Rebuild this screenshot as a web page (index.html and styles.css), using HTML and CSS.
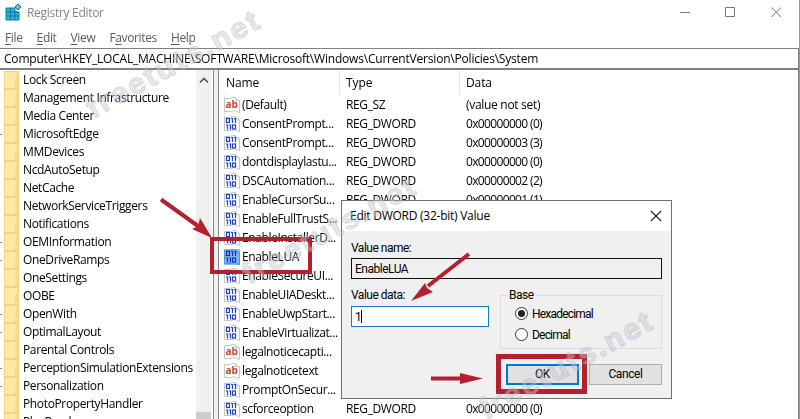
FILE: index.html
```
<!DOCTYPE html>
<html lang="en">
<head>
<meta charset="utf-8">
<title>Registry Editor</title>
<link rel="stylesheet" href="styles.css">
</head>
<body>
<svg width="0" height="0" class="defs">
  <symbol id="page" viewBox="0 0 16 16">
    <path d="M.5 1.500h5l3-1h3l1 2 3 1v12l-3-1-2-1-3 1h-7z" fill="#fdfdfd" stroke="#b3b8b6" stroke-width=".8"/>
    <path d="M11.500 1v3h3" fill="none" stroke="#b9bdbb" stroke-width=".7"/>
  </symbol>
  <symbol id="bin" viewBox="0 0 16 16">
    <use href="#page"/>
    <g fill="none" stroke="#2040c8" stroke-width="1.200">
      <rect x="2.500" y="2.500" width="3" height="4"/><path d="M7 2.500h1.500V7M10 2.500h1.500V7M2 9h1.500v4.500M5 9h1.500v4.500"/><rect x="8.500" y="9" width="3" height="4"/>
    </g>
  </symbol>
</svg>
<div class="window">
  <header class="titlebar">
    <svg class="app" width="17" height="17" viewBox="0 0 17 17">
      <path d="M1 4h9v4h4v8H1z" fill="#25b5e2" stroke="#14789e"/>
      <path d="M1 8h13M1 12h13M5.500 4v12M10 7v9" stroke="#14789e" fill="none"/>
      <path d="M13 0l3 3-3 3-3-3z" fill="#55c8ee" stroke="#23647f"/>
    </svg>
    <span class="name">Registry Editor</span>
    <svg class="controls" width="104" height="14" viewBox="0 0 104 14">
      <path d="M1 6.500h10M46.500 1.500h9v9h-9zM92.500 1.500l9.500 9.500M102 1.500l-9.500 9.500" fill="none" stroke="#777"/>
    </svg>
  </header>
  <nav class="menu"><span><u>F</u>ile</span><span><u>E</u>dit</span><span><u>V</u>iew</span><span>F<u>a</u>vorites</span><span><u>H</u>elp</span></nav>
  <div class="address"><span>Computer\HKEY_LOCAL_MACHINE\SOFTWARE\Microsoft\Windows\CurrentVersion\Policies\System</span></div>
  <main class="panes">
    <ul class="tree">
      <li>Lock Screen</li>
      <li>Management Infrastructure</li>
      <li>Media Center</li>
      <li class="kids">MicrosoftEdge</li>
      <li>MMDevices</li>
      <li>NcdAutoSetup</li>
      <li>NetCache</li>
      <li>NetworkServiceTriggers</li>
      <li>Notifications</li>
      <li class="kids">OEMInformation</li>
      <li class="kids">OneDriveRamps</li>
      <li>OneSettings</li>
      <li>OOBE</li>
      <li class="kids">OpenWith</li>
      <li class="kids">OptimalLayout</li>
      <li>Parental Controls</li>
      <li class="kids">PerceptionSimulationExtensions</li>
      <li class="kids">Personalization</li>
      <li>PhotoPropertyHandler</li>
      <li>PlayReady</li>
    </ul>
    <div class="scroll"><svg width="10" height="7" viewBox="0 0 10 7"><path d="M1 5.500L5 1.500l4 4" fill="none" stroke="#555" stroke-width="1.700"/></svg><i></i></div>
    <div class="split"></div>
    <section class="list">
      <div class="head"><b>Name</b><b>Type</b><b>Data</b><b></b></div>
      <div class="row"><svg><use href="#page"/><text x="1.500" y="10.500">ab</text></svg><span>(Default)</span><span>REG_SZ</span><span class="plain">(value not set)</span></div>
      <div class="row"><svg><use href="#bin"/></svg><span>ConsentPrompt...</span><span>REG_DWORD</span><span>0x00000000 (0)</span></div>
      <div class="row"><svg><use href="#bin"/></svg><span>ConsentPrompt...</span><span>REG_DWORD</span><span>0x00000003 (3)</span></div>
      <div class="row"><svg><use href="#bin"/></svg><span>dontdisplaylastu...</span><span>REG_DWORD</span><span>0x00000000 (0)</span></div>
      <div class="row"><svg><use href="#bin"/></svg><span>DSCAutomation...</span><span>REG_DWORD</span><span>0x00000002 (2)</span></div>
      <div class="row"><svg><use href="#bin"/></svg><span>EnableCursorSu...</span><span>REG_DWORD</span><span>0x00000001 (1)</span></div>
      <div class="row"><svg><use href="#bin"/></svg><span>EnableFullTrustS...</span></div>
      <div class="row"><svg><use href="#bin"/></svg><span>EnableInstallerD...</span></div>
      <div class="row selected"><svg><use href="#bin"/></svg><span>EnableLUA</span></div>
      <div class="row"><svg><use href="#bin"/></svg><span>EnableSecureUI...</span></div>
      <div class="row"><svg><use href="#bin"/></svg><span>EnableUIADeskt...</span></div>
      <div class="row"><svg><use href="#bin"/></svg><span>EnableUwpStart...</span></div>
      <div class="row"><svg><use href="#bin"/></svg><span>EnableVirtualizat...</span></div>
      <div class="row"><svg><use href="#page"/><text x="1.500" y="10.500">ab</text></svg><span>legalnoticecapti...</span></div>
      <div class="row"><svg><use href="#page"/><text x="1.500" y="10.500">ab</text></svg><span>legalnoticetext</span></div>
      <div class="row"><svg><use href="#bin"/></svg><span>PromptOnSecur...</span></div>
      <div class="row"><svg><use href="#bin"/></svg><span>scforceoption</span><span>REG_DWORD</span><span>0x00000000 (0)</span></div>
    </section>
  </main>
  <div class="dialog">
    <div class="dtitle"><span>Edit DWORD (32-bit) Value</span><svg width="12" height="12" viewBox="0 0 12 12"><path d="M1 1l10 10M11 1L1 11" stroke="#222" stroke-width="1.100"/></svg></div>
    <div class="dbody">
      <div class="label">Value name:</div>
      <div class="field readonly">EnableLUA</div>
      <div class="columns">
        <div class="left"><div class="label">Value data:</div><div class="field active">1<i></i></div></div>
        <fieldset><legend>Base</legend>
          <div class="radio on"><i></i>Hexadecimal</div>
          <div class="radio"><i></i>Decimal</div>
        </fieldset>
      </div>
      <div class="buttons"><div class="button default">OK</div><div class="button">Cancel</div></div>
    </div>
  </div>
  <svg class="marks" width="800" height="419" viewBox="0 0 800 419">
    <g fill="none" stroke="#b5202f">
      <rect x="212" y="239" width="98" height="33" stroke-width="4"/>
      <rect x="498.500" y="356.500" width="86" height="35" stroke-width="5"/>
      <path d="M161 199.500L198 226M469 254L428 286M431 378.500H462" stroke-width="4"/>
    </g>
    <path d="M212 238L192 229l6-3 2-8zM411 301l14-18 2 5 6 4zM483 378.500L460 373v11z" fill="#b5202f"/>
    <g class="watermark">
      <text transform="translate(93 119) rotate(-28.500)" textLength="194" lengthAdjust="spacingAndGlyphs">freetuts.net</text>
      <text transform="translate(249 285) rotate(-28.500)" textLength="194" lengthAdjust="spacingAndGlyphs">freetuts.net</text>
      <text transform="translate(486 420) rotate(-28.500)" textLength="194" lengthAdjust="spacingAndGlyphs">freetuts.net</text>
    </g>
  </svg>
</div>
</body>
</html>
```
FILE: styles.css
```
* { box-sizing: border-box; }
body { margin: 0; background: #fff; color: #000; font: 12px/18px "Open Sans", "Noto Sans", sans-serif; letter-spacing: -.2px; }
.defs { position: absolute; }
.window { position: relative; display: flex; flex-direction: column; width: 800px; height: 419px; overflow: hidden; border-right: 1px solid #999; white-space: nowrap; }
.titlebar { display: flex; align-items: center; height: 26px; padding: 0 16px 0 5px; color: #858585; letter-spacing: -.3px; }
.app { margin-top: -1px; }
.name { margin-left: 5px; }
.controls { margin-left: auto; }
.menu { display: flex; height: 22px; padding: 3px 0 0 5px; gap: 14px; color: #5c5c5c; letter-spacing: -.35px; }
.menu u { text-underline-offset: 2px; }
.address { height: 22px; padding: 1px 4px; border: solid #808080; border-width: 1px 1px 2px 0; }
.panes { display: flex; flex: 1; min-height: 0; border-right: 1px solid #808080; }
.tree { width: 196px; margin: 0; padding: 1px 0 0 4px; list-style: none; overflow: hidden; letter-spacing: -.36px; }
.tree li { position: relative; display: flex; align-items: center; height: 18px; }
.tree li::before { content: ""; flex: none; width: 13px; height: 16px; margin-right: 6px; border: 1px solid #efd57e; background: linear-gradient(100deg, #ffe9a4 75%, #f8dc84 77%); }
.tree li { text-indent: -2px; }
.tree .kids::after { content: ""; position: absolute; left: -4px; top: 9px; width: 2px; height: 1px; background: #888; }
.scroll { display: flex; flex-direction: column; align-items: center; justify-content: space-between; width: 15px; padding-top: 7px; background: #f0f0f0; }
.scroll i { width: 15px; height: 7px; background: #cdcdcd; }
.split { width: 6px; margin-left: 2px; margin-right: -2px; border: 1px solid #888; border-width: 0 1px; background: #f0f0f0; }
.list { flex: 1; padding-left: 7px; letter-spacing: -.38px; }
.head { display: grid; grid-template-columns: 115px 120px 288px; height: 25px; padding-top: 1px; letter-spacing: -.1px; }
.head b { height: 24px; padding-left: 6px; border-left: 1px solid #e2e2e2; font-weight: 400; line-height: 24px; }
.head b:first-child { padding-left: 2px; border: 0; }
.row { display: grid; grid-template-columns: 18px 104px 120px 120px; align-items: center; height: 19px; }
.row span:nth-of-type(3) { letter-spacing: -.65px; }
.row .plain:nth-of-type(3) { letter-spacing: -.3px; }
.row svg { width: 16px; height: 16px; }
.row text { fill: #c74431; font: 700 10px "Open Sans", sans-serif; letter-spacing: 0; }
.selected svg { background: #79bdf2; }
.selected use { mix-blend-mode: multiply; }
.dialog { position: absolute; left: 341px; top: 200px; width: 331px; height: 199px; border: 1px solid #707070; background: #f0f0f0; }
.dtitle { display: flex; justify-content: space-between; align-items: center; height: 30px; padding: 0 9px 0 8px; background: #fff; letter-spacing: -.25px; }
.dbody { padding: 9px 9px 0; font: 12px/16px Roboto, "Liberation Sans", sans-serif; letter-spacing: -.5px; }
.label { height: 16px; }
.field { height: 21px; margin-top: 2px; padding: 2px 3px; border: 1px solid #111; line-height: 16px; }
.active { display: flex; align-items: center; margin-top: 3px; background: #fff; border-color: #1279c4; }
.active i { width: 1px; height: 13px; background: #000; }
.columns { display: flex; justify-content: space-between; margin-top: 8px; }
.left { width: 138px; }
fieldset { width: 162px; height: 62px; margin: 0; padding: 1px 14px; border: 1px solid #dcdcdc; letter-spacing: -.8px; }
legend { height: 16px; margin-left: -8px; padding: 0 2px; letter-spacing: -.5px; }
.radio { display: flex; align-items: center; height: 21px; margin-top: -1px; margin-bottom: 1px; }
.radio i { display: flex; width: 13px; height: 13px; margin-right: 4px; border: 1px solid #333; border-radius: 50%; background: #fff; }
.on i::after { content: ""; width: 7px; height: 7px; margin: 2px; border-radius: 50%; background: #222; }
.buttons { display: flex; justify-content: flex-end; gap: 10px; margin-top: 15px; letter-spacing: -.4px; }
.button { width: 73px; height: 21px; border: 1px solid #adadad; background: #e1e1e1; text-align: center; line-height: 19px; }
.default { border: 2px solid #0078d7; line-height: 17px; }
.marks { position: absolute; left: 0; top: 0; }
.watermark { font: 700 29px "Liberation Sans", sans-serif; letter-spacing: 2px; fill: #c9cdd6; fill-opacity: .45; stroke: #8f96a3; stroke-opacity: .35; stroke-width: .8; }
```
